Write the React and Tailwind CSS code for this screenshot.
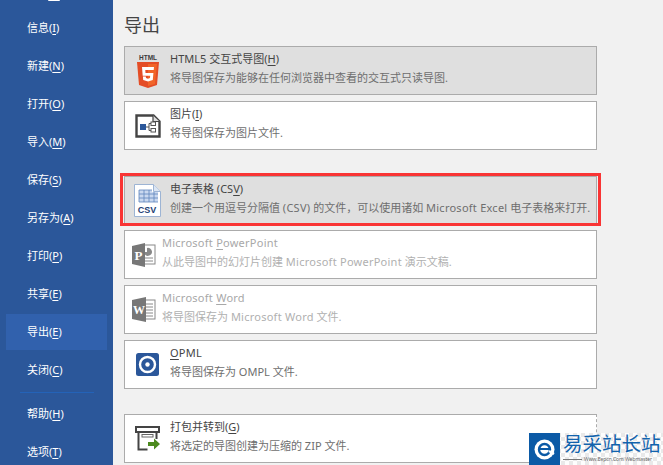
import React from "react";

const FONT = "font-['Noto_Sans','Noto_Sans_CJK_SC',sans-serif]";

// text with the access key underlined
function Key({ before, k, after }) {
  return (
    <>
      {before}
      <span className="underline underline-offset-2">{k}</span>
      {after}
    </>
  );
}

// latin runs are a touch wider in the original
function L({ children }) {
  return <span className="tracking-[0.25px]">{children}</span>;
}

function NavItem({ before, k, after, active }) {
  return (
    <div className="h-[38px] shrink-0 py-px px-[6px]">
      <div className={`h-[36px] flex items-center pl-[21px] text-[11px] text-white ${active ? "bg-[#3161ad]" : ""}`}>
        <span>
          <Key before={before} k={k} after={after} />
        </span>
      </div>
    </div>
  );
}

function Html5Icon() {
  return (
    <svg width="24" height="36" viewBox="0 0 24 36">
      <text x="12" y="7" textAnchor="middle" fontSize="6.5" fontWeight="900" fill="#3a3a3a" fontFamily="Liberation Sans, sans-serif">HTML</text>
      <path d="M1 9h22l-2 23-9 3-9-3z" fill="#e44d26" />
      <path d="M12 11v22l7-2 2-20z" fill="#f16529" />
      <path d="M6 14h12l-.3 3H9.300l.2 3h7.900l-.6 7-4.800 1.500-4.800-1.500-.3-3.500h2.900l.2 1.600 2 .6 2-.6.2-2.300H6.700z" fill="#fff" />
    </svg>
  );
}

function ImageIcon() {
  return (
    <svg width="26" height="24" viewBox="0 0 26 24">
      <path d="M1.500 1.500h17l6 6v15h-23z" fill="#fff" stroke="#444" strokeWidth="2.400" />
      <path d="M18 1.500v6h6.500" fill="#ddd" stroke="#444" strokeWidth="1.200" />
      <rect x="5" y="10" width="6" height="6" fill="#2b579a" />
      <path d="M11 13h3M14 9.500h2M14 16.500h2M14 9.500v7" stroke="#555" fill="none" />
      <rect x="16" y="8" width="4.500" height="3.500" fill="#fff" stroke="#555" />
      <rect x="16" y="14.500" width="4.500" height="3.500" fill="#fff" stroke="#555" />
    </svg>
  );
}

function CsvIcon() {
  return (
    <svg width="27" height="33" viewBox="0 0 27 33">
      <path d="M.5.500h19l7 7v25H.5z" fill="#fff" stroke="#9db4d4" />
      <path d="M19.500.500v7h7" fill="#dbe5f3" stroke="#9db4d4" />
      <path d="M5 6h13v2H24v10H5z" fill="#c9d8ef" />
      <path d="M5 6h13M5 10h19M5 14h19M5 18h19M5 6v12M10 6v12M15 6v12M20 8v10" stroke="#5f86bd" strokeWidth=".8" fill="none" />
      <text x="13" y="29" textAnchor="middle" fontSize="9" fontWeight="700" fill="#1f3f75" fontFamily="Liberation Sans, sans-serif">CSV</text>
    </svg>
  );
}

function PptIcon() {
  return (
    <svg width="24" height="24" viewBox="0 0 24 24">
      <rect x="10" y="2" width="13" height="19" fill="#fff" stroke="#888" />
      <path d="M15 5a4 4 0 1 1-3 4h3z" fill="#888" />
      <path d="M13 15h8M13 18h8" stroke="#888" />
      <path d="M0 3l13-3v24L0 21z" fill="#777" />
      <text x="6.500" y="16.500" textAnchor="middle" fontSize="13" fontWeight="700" fill="#fff" fontFamily="Liberation Serif, serif">P</text>
    </svg>
  );
}

function WordIcon() {
  return (
    <svg width="24" height="25" viewBox="0 0 24 25">
      <rect x="11" y="3" width="12" height="19" fill="#fff" stroke="#888" />
      <path d="M14 7h7M14 10h7M14 13h7M14 16h7M14 19h7" stroke="#888" />
      <path d="M0 3l14-3v25L0 22z" fill="#777" />
      <text x="7" y="17" textAnchor="middle" fontSize="12" fontWeight="700" fill="#fff" fontFamily="Liberation Serif, serif">W</text>
    </svg>
  );
}

function OpmlIcon() {
  return (
    <svg width="23" height="23" viewBox="0 0 23 23">
      <rect width="23" height="23" rx="2.500" fill="#2b579a" />
      <circle cx="11.500" cy="11.500" r="7.500" fill="none" stroke="#fff" strokeWidth="2.400" />
      <circle cx="11.500" cy="11.500" r="2.200" fill="#fff" />
    </svg>
  );
}

function PackIcon() {
  return (
    <svg width="25" height="25" viewBox="0 0 25 25">
      <rect x="1" y="1" width="23" height="5" fill="#fff" stroke="#444" strokeWidth="2" />
      <path d="M3.500 6v17.500h9M21.500 6v7" fill="none" stroke="#444" strokeWidth="2" />
      <rect x="7" y="8.500" width="11" height="2.500" fill="#fff" stroke="#666" />
      <path d="M13 16h6v-3.500l6 5.500-6 5.500V20h-6z" fill="#4c8a1e" />
    </svg>
  );
}

function Card({ icon, iconCol = "w-[45px]", disabled, hover, title, desc, className = "" }) {
  return (
    <div className={`relative h-[49px] shrink-0 flex border border-[#ababab] ${hover ? "bg-[#dfdfdf]" : "bg-white"} ${className}`}>
      <div className={`${iconCol} shrink-0 flex items-center justify-center`}>{icon}</div>
      <div className="pt-[3px]">
        <div className={`h-[18px] leading-[18px] text-[11px] ${disabled ? "text-[#a8a8a8]" : "text-[#444]"}`}>{title}</div>
        <div className={`mt-px h-[18px] leading-[18px] text-[11px] whitespace-nowrap ${disabled ? "text-[#b0b0b0]" : "text-[#6e6e6e]"}`}>{desc}</div>
      </div>
      {hover === "red" && (
        <div className="absolute left-[-5px] right-[-5px] top-[-4px] bottom-[-2px] border-[3px] border-[#f93434] pointer-events-none" />
      )}
    </div>
  );
}

function Watermark() {
  return (
    <div className="absolute right-0 bottom-0 w-[134px] h-[32px] flex bg-[#f7f7f7] bg-[repeating-conic-gradient(#e9e9e9_0%_25%,#fdfdfd_0%_50%)] bg-[length:8px_8px]">
      <div className="w-[31px] h-[32px] bg-[#0b5aa6] flex items-center justify-center shrink-0">
        <svg width="21" height="21" viewBox="0 0 21 21">
          <circle cx="10.500" cy="10.500" r="10" fill="#fff" />
          <circle cx="10.500" cy="10.500" r="5.500" fill="none" stroke="#0b5aa6" strokeWidth="2.400" />
          <path d="M5 10h11" stroke="#0b5aa6" strokeWidth="2" />
          <path d="M15 12l5 3" stroke="#fff" strokeWidth="2.400" />
        </svg>
      </div>
      <div className="pl-[3px] pt-px min-w-0">
        <div className="h-[21px] leading-[21px] text-[19.500px] text-[#1263ad] whitespace-nowrap font-['Liberation_Sans','Noto_Sans_CJK_SC',sans-serif]">易采站长站</div>
        <div className="flex items-center gap-[2px] h-[9px]">
          <span className="w-[19px] h-px bg-[#777] shrink-0" />
          <span className="text-[5px] leading-[9px] text-[#666] whitespace-nowrap">Www.Eepcn.Com Webmaster</span>
        </div>
      </div>
    </div>
  );
}

export default function App() {
  return (
    <div className={`relative w-[663px] h-[465px] overflow-hidden flex bg-[#f1f1f1] ${FONT}`}>
      {/* 左侧菜单 */}
      <div className="w-[113px] h-full shrink-0 bg-[#2b579a] flex flex-col overflow-hidden">
        <div className="h-[9px] shrink-0">
          <div className="ml-[48px] w-[12px] h-px bg-white rounded-b-full" />
        </div>
        <NavItem before="信息(" k="I" after=")" />
        <NavItem before="新建(" k="N" after=")" />
        <NavItem before="打开(" k="O" after=")" />
        <NavItem before="导入(" k="M" after=")" />
        <NavItem before="保存(" k="S" after=")" />
        <NavItem before="另存为(" k="A" after=")" />
        <NavItem before="打印(" k="P" after=")" />
        <NavItem before="共享(" k="E" after=")" />
        <NavItem before="导出(" k="E" after=")" active />
        <NavItem before="关闭(" k="C" after=")" />
        <div className="h-[6px] shrink-0 flex items-center">
          <div className="ml-[20px] w-[74px] h-px bg-[#2463b8]" />
        </div>
        <NavItem before="帮助(" k="H" after=")" />
        <NavItem before="选项(" k="T" after=")" />
      </div>

      {/* 导出内容 */}
      <div className="flex-1 pl-[11px] flex flex-col">
        <div className="w-[473px]">
          <div className="h-[46px] pt-[12px] text-[18px] leading-[26px] text-[#444]">导出</div>
          <div className="flex flex-col">
            <Card
              hover
              icon={<Html5Icon />}
              title={<Key before="HTML5 交互式导图(" k="H" after=")" />}
              desc="将导图保存为能够在任何浏览器中查看的交互式只读导图."
            />
            <Card
              className="mt-[6px]"
              icon={<ImageIcon />}
              title={<Key before="图片(" k="I" after=")" />}
              desc="将导图保存为图片文件."
            />
            <Card
              className="mt-[26px]"
              hover="red"
              icon={<CsvIcon />}
              title={<Key before="电子表格 (CS" k="V" after=")" />}
              desc={<>创建一个用逗号分隔值 <L>(CSV)</L> 的文件，可以使用诸如 <L>Microsoft Excel</L> 电子表格来打开.</>}
            />
            <Card
              className="mt-[5px]"
              disabled
              iconCol="w-[37px]"
              icon={<PptIcon />}
              title={<L><Key before="Microsoft " k="P" after="owerPoint" /></L>}
              desc={<>从此导图中的幻灯片创建 <L>Microsoft PowerPoint</L> 演示文稿.</>}
            />
            <Card
              className="mt-[6px]"
              disabled
              iconCol="w-[37px]"
              icon={<WordIcon />}
              title={<L><Key before="Microsoft " k="W" after="ord" /></L>}
              desc={<>将导图保存为 <L>Microsoft Word</L> 文件.</>}
            />
            <Card
              className="mt-[6px]"
              icon={<OpmlIcon />}
              title={<L><Key before="" k="O" after="PML" /></L>}
              desc="将导图保存为 OMPL 文件."
            />
            <Card
              className="mt-[25px] [border-right-style:dashed]"
              icon={<PackIcon />}
              title={<Key before="打包并转到(" k="G" after=")" />}
              desc="将选定的导图创建为压缩的 ZIP 文件."
            />
          </div>
        </div>
      </div>

      <Watermark />
    </div>
  );
}
